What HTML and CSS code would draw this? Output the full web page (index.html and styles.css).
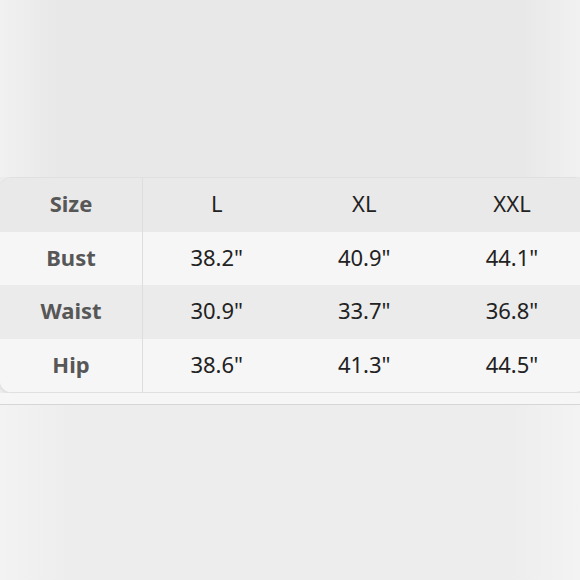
FILE: index.html
```html
<!DOCTYPE html>
<html>
<head>
<meta charset="utf-8">
<link rel="stylesheet" href="styles.css">
</head>
<body>
<div class="page">
  <div class="top"></div>
  <div class="chart">
    <div class="row head">
      <div class="cell label">Size</div>
      <div class="cell">L</div>
      <div class="cell">XL</div>
      <div class="cell">XXL</div>
    </div>
    <div class="row light">
      <div class="cell label">Bust</div>
      <div class="cell">38.2"</div>
      <div class="cell">40.9"</div>
      <div class="cell">44.1"</div>
    </div>
    <div class="row dark">
      <div class="cell label">Waist</div>
      <div class="cell">30.9"</div>
      <div class="cell">33.7"</div>
      <div class="cell">36.8"</div>
    </div>
    <div class="row light">
      <div class="cell label">Hip</div>
      <div class="cell">38.6"</div>
      <div class="cell">41.3"</div>
      <div class="cell">44.5"</div>
    </div>
  </div>
  <div class="band"></div>
  <div class="bottom"></div>
</div>
</body>
</html>
```
FILE: styles.css
```css
html, body {
  margin: 0;
  padding: 0;
}
body {
  width: 580px;
  height: 580px;
  overflow: hidden;
  font-family: "Noto Sans", "Open Sans", sans-serif;
  background: #ececec;
}
.page {
  display: flex;
  flex-direction: column;
  height: 580px;
}
.top {
  height: 177px;
  background: linear-gradient(to right, #f1f1f1 0%, #e8e8e8 10%, #e8e8e8 90%, #f1f1f1 100%);
}
.chart {
  width: 586px;
  margin-left: -1px;
  border: 1px solid #e0e0e0;
  border-radius: 12px;
  overflow: hidden;
  background: #f6f6f6;
  box-shadow: 0 1px 2px rgba(0,0,0,0.06);
}
.row {
  display: grid;
  grid-template-columns: 143px 147.5px 147.5px 1fr;
  height: 53.5px;
}
.head { background: #e9e9e9; }
.light { background: #f6f6f6; }
.dark { background: #ebebeb; }
.cell {
  display: flex;
  align-items: center;
  justify-content: center;
  padding-bottom: 3px;
  font-size: 22px;
  color: #222;
}
.cell.label {
  font-weight: 700;
  color: #575757;
  border-right: 1px solid #dedede;
}
.band {
  height: 11px;
  background: #f6f6f6;
  border-bottom: 1px solid #d6d6d6;
}
.bottom {
  flex: 1;
  background: linear-gradient(to right, #f3f3f3 0%, #ededed 12%, #ededed 88%, #f3f3f3 100%);
}
```
